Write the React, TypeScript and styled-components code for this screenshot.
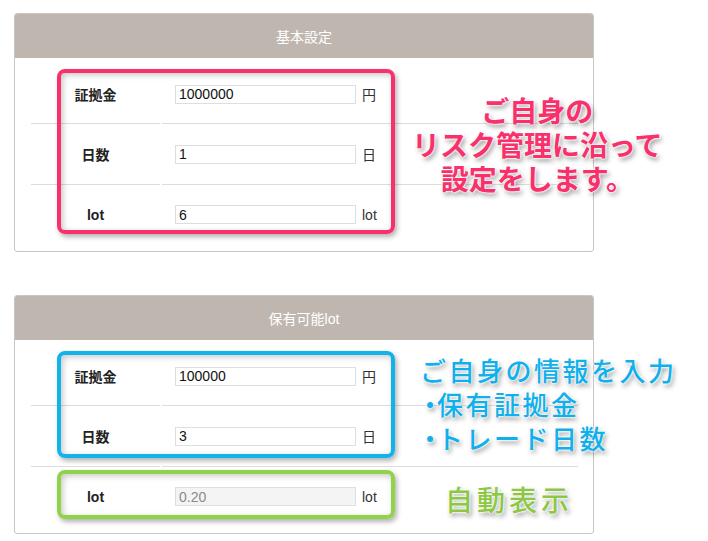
import React from "react";
import styled, { createGlobalStyle, css } from "styled-components";

const Global = createGlobalStyle`
  html, body { margin: 0; padding: 0; background: #fff; }
  body { font-family: "Liberation Sans", "Noto Sans CJK JP", sans-serif; }
`;

const Page = styled.div`
  position: relative;
  width: 708px;
  height: 541px;
  padding: 13px 0 0 14px;
  box-sizing: border-box;
  display: flex;
  flex-direction: column;
  gap: 43px;
`;

const Section = styled.div`
  position: relative;
  width: 580px;
`;

const Panel = styled.div`
  border: 1px solid #c9c5c1;
  border-radius: 3px;
  background: #fff;
  overflow: hidden;
`;

const Header = styled.div`
  height: 44px;
  background: #bfb7af;
  color: #fff;
  font-size: 14px;
  display: flex;
  align-items: center;
  justify-content: center;
  font-family: "Liberation Sans", "Noto Sans CJK JP", sans-serif;
`;

const Body = styled.div`
  padding: 0 16px 7px 16px;
  display: flex;
  flex-direction: column;
`;

const Row = styled.div`
  display: flex;
  align-items: stretch;
  width: 547px;
`;

const LabelCell = styled.div<{ $top: number; $bottom: number; $last?: boolean }>`
  width: 129px;
  box-sizing: border-box;
  padding: ${(p) => p.$top}px 0 ${(p) => p.$bottom}px;
  display: flex;
  align-items: center;
  justify-content: center;
  font-weight: bold;
  font-size: 14px;
  color: #222;
  ${(p) => !p.$last && css`border-bottom: 1px solid #dcdcdc;`}
`;

const ValueCell = styled.div<{ $top: number; $bottom: number; $last?: boolean }>`
  flex: 1;
  margin-left: 2px;
  padding: ${(p) => p.$top}px 0 ${(p) => p.$bottom}px 13px;
  display: flex;
  align-items: center;
  gap: 6px;
  ${(p) => !p.$last && css`border-bottom: 1px solid #dcdcdc;`}
`;

const Input = styled.input<{ $readOnlyLook?: boolean }>`
  width: 181px;
  height: 19px;
  box-sizing: border-box;
  border: 1px solid #dedede;
  padding: 0 3px;
  font-family: "Liberation Sans", sans-serif;
  font-size: 14px;
  color: ${(p) => (p.$readOnlyLook ? "#8a8a8a" : "#111")};
  background: ${(p) => (p.$readOnlyLook ? "#f4f4f4" : "#fff")};
  outline: none;
`;

const Unit = styled.span`
  font-size: 14px;
  color: #333;
`;

const Frame = styled.div<{ $color: string; $top: number; $height: number }>`
  position: absolute;
  left: 43px;
  top: ${(p) => p.$top}px;
  width: 338px;
  height: ${(p) => p.$height}px;
  box-sizing: border-box;
  border: 4px solid ${(p) => p.$color};
  border-radius: 8px;
  box-shadow: 2px 3px 5px rgba(0, 0, 0, 0.3), inset 2px 2px 6px rgba(0, 0, 0, 0.22);
  pointer-events: none;
`;

const Note = styled.div<{
  $color: string;
  $left: number;
  $top: number;
  $size: number;
  $spacing: number;
  $bold?: boolean;
  $center?: boolean;
  $lh: number;
}>`
  position: absolute;
  left: ${(p) => p.$left}px;
  top: ${(p) => p.$top}px;
  color: ${(p) => p.$color};
  font-family: "Noto Sans CJK JP", sans-serif;
  font-size: ${(p) => p.$size}px;
  font-weight: ${(p) => (p.$bold ? 700 : 500)};
  letter-spacing: ${(p) => p.$spacing}px;
  line-height: ${(p) => p.$lh}px;
  text-align: ${(p) => (p.$center ? "center" : "left")};
  white-space: nowrap;
  text-shadow: 0 0 2px #fff, 0 0 2px #fff, 0 0 3px #fff, 2px 3px 5px rgba(0, 0, 0, 0.45);
`;

const NoteLine = styled.div``;

const Dot = styled.span`
  letter-spacing: -6px;
  margin-left: -3px;
`;

type RowData = { label: string; value: string; unit: string; readOnly?: boolean };

const rowsPad = [
  { top: 26, bottom: 19 },
  { top: 20, bottom: 20 },
  { top: 20, bottom: 20 },
];

function Table({ title, rows }: { title: string; rows: RowData[] }) {
  return (
    <Panel>
      <Header>{title}</Header>
      <Body>
        {rows.map((r, i) => {
          const pad = rowsPad[i];
          const last = i === rows.length - 1;
          return (
            <Row key={i}>
              <LabelCell $top={pad.top} $bottom={pad.bottom} $last={last}>
                {r.label}
              </LabelCell>
              <ValueCell $top={pad.top} $bottom={pad.bottom} $last={last}>
                <Input defaultValue={r.value} readOnly={r.readOnly} $readOnlyLook={r.readOnly} />
                <Unit>{r.unit}</Unit>
              </ValueCell>
            </Row>
          );
        })}
      </Body>
    </Panel>
  );
}

export default function App() {
  return (
    <>
      <Global />
      <Page>
        <Section>
          <Table
            title="基本設定"
            rows={[
              { label: "証拠金", value: "1000000", unit: "円" },
              { label: "日数", value: "1", unit: "日" },
              { label: "lot", value: "6", unit: "lot" },
            ]}
          />
          <Frame $color="#f8306b" $top={56} $height={165} />
        </Section>
        <Section>
          <Table
            title="保有可能lot"
            rows={[
              { label: "証拠金", value: "100000", unit: "円" },
              { label: "日数", value: "3", unit: "日" },
              { label: "lot", value: "0.20", unit: "lot", readOnly: true },
            ]}
          />
          <Frame $color="#12b3ec" $top={56} $height={107} />
          <Frame $color="#92d14a" $top={175} $height={49} />
        </Section>
        <Note $color="#f8306b" $left={412} $top={93} $size={28} $spacing={0} $bold $center $lh={34}>
          <NoteLine>ご自身の</NoteLine>
          <NoteLine>リスク管理に沿って</NoteLine>
          <NoteLine>設定をします。</NoteLine>
        </Note>
        <Note $color="#0fb0ec" $left={420} $top={353} $size={26} $spacing={2.5} $lh={34}>
          <NoteLine>ご自身の情報を入力</NoteLine>
          <NoteLine>
            <Dot>・</Dot>保有証拠金
          </NoteLine>
          <NoteLine>
            <Dot>・</Dot>トレード日数
          </NoteLine>
        </Note>
        <Note $color="#8cc843" $left={445} $top={480} $size={28} $spacing={4} $lh={38}>
          自動表示
        </Note>
      </Page>
    </>
  );
}
